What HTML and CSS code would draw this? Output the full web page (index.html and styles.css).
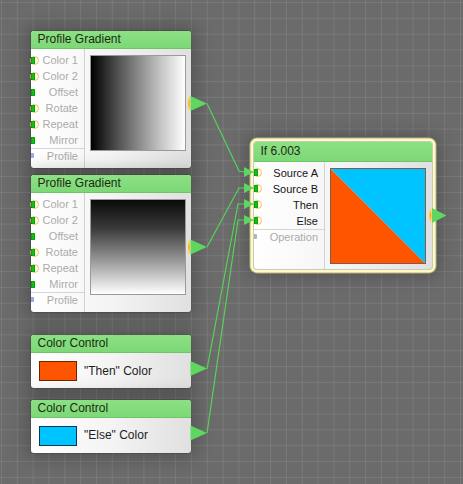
FILE: index.html
```html
<!DOCTYPE html>
<html>
<head>
<meta charset="utf-8">
<link rel="stylesheet" href="styles.css">
</head>
<body>
<div class="canvas">

  <div class="node pg n1">
    <div class="head">Profile Gradient</div>
    <div class="body">
      <div class="ports">
        <div class="row ring">Color 1</div>
        <div class="row ring">Color 2</div>
        <div class="row">Offset</div>
        <div class="row ring">Rotate</div>
        <div class="row ring">Repeat</div>
        <div class="row">Mirror</div>
        <div class="row sep blue">Profile</div>
      </div>
      <div class="preview grad-h"></div>
    </div>
  </div>

  <div class="node pg n2">
    <div class="head">Profile Gradient</div>
    <div class="body">
      <div class="ports">
        <div class="row ring">Color 1</div>
        <div class="row ring">Color 2</div>
        <div class="row">Offset</div>
        <div class="row ring">Rotate</div>
        <div class="row ring">Repeat</div>
        <div class="row">Mirror</div>
        <div class="row sep blue">Profile</div>
      </div>
      <div class="preview grad-v"></div>
    </div>
  </div>

  <div class="node cc n3">
    <div class="head">Color Control</div>
    <div class="ccbody">
      <div class="swatch orange"></div>
      <span class="cclabel">"Then" Color</span>
    </div>
  </div>

  <div class="node cc n4">
    <div class="head">Color Control</div>
    <div class="ccbody">
      <div class="swatch cyan"></div>
      <span class="cclabel">"Else" Color</span>
    </div>
  </div>

  <div class="node ifnode">
    <div class="head ifhead">If 6.003</div>
    <div class="body">
      <div class="ports ifports">
        <div class="row ring active">Source A</div>
        <div class="row ring active">Source B</div>
        <div class="row ring active">Then</div>
        <div class="row ring active">Else</div>
        <div class="row sep grayport">Operation</div>
      </div>
      <div class="preview ifprev">
        <svg width="94" height="94" viewBox="0 0 94 94">
          <polygon points="0,0 94,94 0,94" fill="#ff5500"/>
          <polygon points="0,0 94,0 94,94" fill="#00c4ff"/>
        </svg>
      </div>
    </div>
  </div>

  <svg class="wires" width="463" height="484" viewBox="0 0 463 484">
    <defs>
      <radialGradient id="glow" cx="0.5" cy="0.5" r="0.5">
        <stop offset="0" stop-color="#ff9a00"/>
        <stop offset="0.6" stop-color="#ffcf40" stop-opacity="0.8"/>
        <stop offset="1" stop-color="#ffe080" stop-opacity="0"/>
      </radialGradient>
    </defs>
    <g fill="none" stroke="#55d455" stroke-width="1.2">
      <polyline points="207,103.5 239,171 245,172"/>
      <polyline points="207,247 239,188 245,188"/>
      <polyline points="207,369 238,204 245,204"/>
      <polyline points="207,433 238,220 245,220"/>
    </g>
    <g fill="#5fd65f">
      <polygon points="190.5,96 207,103.5 190.5,111"/>
      <polygon points="190.5,239.5 207,247 190.5,254.5"/>
      <polygon points="190.5,361 207,368.5 190.5,376"/>
      <polygon points="190.5,425.5 207,433 190.5,440.5"/>
      <polygon points="432,208 446.5,215.5 432,223"/>
      <polygon points="244,167 254,172 244,177"/>
      <polygon points="244,183 254,188 244,193"/>
      <polygon points="244,199 254,204 244,209"/>
      <polygon points="244,215 254,220 244,225"/>
    </g>
    <ellipse cx="189" cy="103.5" rx="1.8" ry="9" fill="url(#glow)"/>
    <ellipse cx="189" cy="247" rx="1.8" ry="9" fill="url(#glow)"/>
    <ellipse cx="430.5" cy="215.5" rx="1.8" ry="9" fill="url(#glow)"/>
  </svg>
</div>
</body>
</html>
```

FILE: styles.css
```css
html, body {
  margin: 0;
  padding: 0;
  background: #6b6b6b;
}
.canvas {
  position: relative;
  width: 463px;
  height: 484px;
  overflow: hidden;
  background-color: #6b6b6b;
  background-image:
    linear-gradient(to right, rgba(255,255,255,0.09) 1px, transparent 1px),
    linear-gradient(to bottom, rgba(255,255,255,0.09) 1px, transparent 1px);
  background-size: 15.84px 15.84px;
  background-position: 1px 2px;
  font-family: "Liberation Sans", Arial, sans-serif;
}
.node {
  position: absolute;
  width: 160px;
  border-radius: 3px;
  background: linear-gradient(to right, #ffffff 0%, #f4f4f4 50%, #e0e0e0 100%);
  box-shadow: 0 0 0 1px rgba(0,0,0,0.12), 0 0 18px 5px rgba(0,0,0,0.22);
}
.n1 { left: 31px; top: 31px; height: 137px; }
.n2 { left: 31px; top: 175px; height: 137px; }
.n3 { left: 31px; top: 335px; height: 53px; }
.n4 { left: 31px; top: 399.5px; height: 53px; }

.head {
  box-sizing: border-box;
  height: 18px;
  line-height: 17px;
  padding-left: 6.5px;
  font-size: 12px;
  color: #1c2a12;
  background: linear-gradient(to bottom, #8be084 0%, #7ed877 100%);
  border-bottom: 1px solid #6fc468;
  border-radius: 3px 3px 0 0;
  white-space: nowrap;
}
.body {
  display: flex;
  align-items: flex-start;
}
.ports {
  box-sizing: border-box;
  width: 54px;
  height: 119px;
  padding-top: 3px;
  border-right: 1px solid #d2d2d2;
}
.row {
  position: relative;
  box-sizing: border-box;
  height: 16px;
  line-height: 16px;
  padding-right: 6px;
  text-align: right;
  font-size: 11px;
  color: #ababab;
  white-space: nowrap;
}
.row::before {
  content: "";
  position: absolute;
  left: 0;
  top: 4.5px;
  width: 4px;
  height: 7px;
  background: #0cc40c;
  border-radius: 0 1px 1px 0;
  box-shadow: inset 0 0 0 0.6px #078a07;
  z-index: 1;
}
.row.ring::after {
  content: "";
  position: absolute;
  box-sizing: border-box;
  left: -1px;
  top: 3.5px;
  width: 9px;
  height: 9px;
  border: 1.6px solid #f2c451;
  border-radius: 50%;
}
.row.sep {
  border-top: 1px solid #d6d6d6;
  line-height: 15px;
}
.row.sep::before { top: 4px; }
.row.blue::before {
  background: #93aee6;
  width: 3px;
  height: 5px;
  box-shadow: none;
}
.row.grayport::before {
  background: #b4b4b4;
  width: 3px;
  height: 5px;
  box-shadow: none;
}
.row.active { color: #151515; }

.preview {
  box-sizing: border-box;
  width: 96px;
  height: 96px;
  margin-left: 5px;
  margin-top: 6px;
  border: 1px solid #9a9a9a;
}
.grad-h { background: linear-gradient(to right, #000 0%, #555 30%, #bbb 70%, #fff 100%); }
.grad-v { background: linear-gradient(to bottom, #0a0a0a 0%, #3a3a3a 30%, #9a9a9a 65%, #fff 100%); }

.ccbody {
  display: flex;
  align-items: center;
  height: 35px;
  padding-left: 8px;
}
.swatch {
  box-sizing: border-box;
  width: 38px;
  height: 20px;
  margin-top: 1px;
}
.swatch.orange { background: #ff5500; border: 1px solid #6a2500; }
.swatch.cyan { background: #00c4ff; border: 1px solid #08384f; }
.cclabel {
  margin-left: 7px;
  font-size: 12px;
  color: #1b1b22;
  white-space: nowrap;
}

.ifnode {
  left: 254px;
  top: 142px;
  width: 178px;
  height: 127px;
  border-radius: 3px;
  box-shadow:
    0 0 0 1px #c8c8c8,
    0 0 0 3.5px #fffbbf,
    0 0 0 4.5px #b7b182,
    0 0 18px 6px rgba(0,0,0,0.25);
}
.ifhead { height: 19.5px; line-height: 18.5px; }
.ifports { width: 71px; height: 107px; }
.ifprev {
  margin-left: 5px;
  margin-top: 6px;
  border: 1px solid #8a5a40;
  line-height: 0;
}
.ifprev svg { display: block; }

.wires {
  position: absolute;
  left: 0;
  top: 0;
  pointer-events: none;
}
```
